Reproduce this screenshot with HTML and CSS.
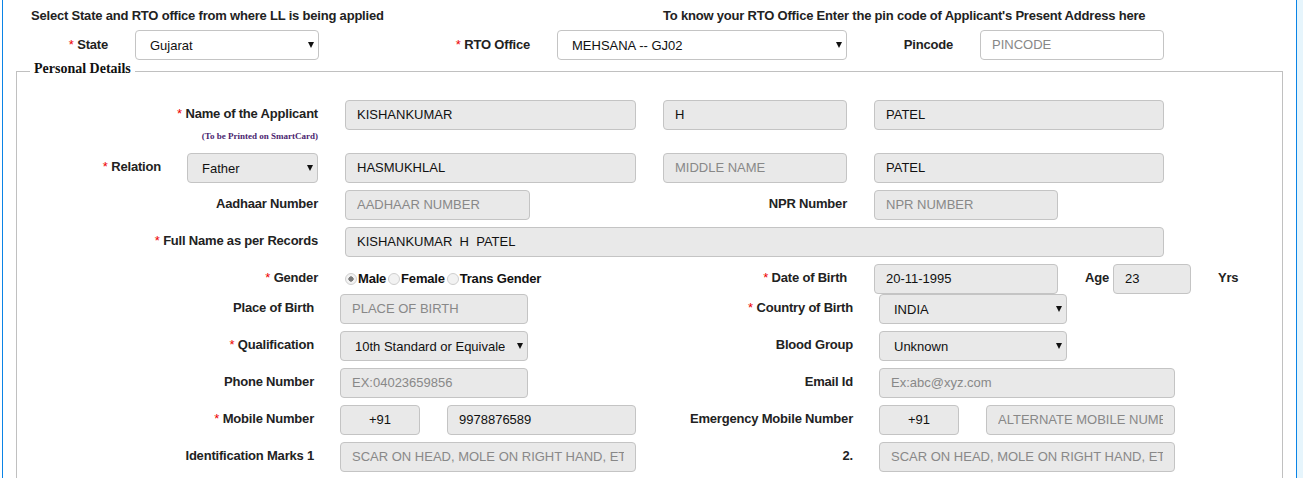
FILE: index.html
```html
<!DOCTYPE html>
<html>
<head>
<meta charset="utf-8">
<title>Learner Licence Application</title>
<link rel="stylesheet" href="styles.css">
</head>
<body>
<div class="page">
  <div class="frame">
    <div class="head">
      <div class="head-left">Select State and RTO office from where LL is being applied</div>
      <div class="head-right">To know your RTO Office Enter the pin code of Applicant's Present Address here</div>
    </div>
    <div class="toprow">
      <div class="lbl top"><span class="req">*</span> State</div>
      <div class="sel"><select class="white"><option>Gujarat</option></select></div>
      <div class="lbl top"><span class="req">*</span> RTO Office</div>
      <div class="sel"><select class="white"><option>MEHSANA -- GJ02</option></select></div>
      <div class="lbl top">Pincode</div>
      <input class="inp white" placeholder="PINCODE">
    </div>

    <fieldset class="personal">
      <legend>Personal Details</legend>

      <div class="rows rows-a">
        <div class="row ra name-row">
          <div class="lblcell">
            <div class="lbl"><span class="req">*</span> Name of the Applicant</div>
            <div class="note">(To be Printed on SmartCard)</div>
          </div>
          <input class="inp w291" value="KISHANKUMAR">
          <input class="inp w184" value="H">
          <input class="inp w290" value="PATEL">
        </div>

        <div class="row ra">
          <div class="relcell">
            <div class="lbl"><span class="req">*</span> Relation</div>
            <div class="sel w131"><select><option>Father</option></select></div>
          </div>
          <input class="inp w291" value="HASMUKHLAL">
          <input class="inp w184" placeholder="MIDDLE NAME">
          <input class="inp w290" value="PATEL">
        </div>

        <div class="row ra">
          <div class="lbl">Aadhaar Number</div>
          <input class="inp w185" placeholder="AADHAAR NUMBER">
          <div class="lbl">NPR Number</div>
          <input class="inp w184" placeholder="NPR NUMBER">
        </div>

        <div class="row ra">
          <div class="lbl"><span class="req">*</span> Full Name as per Records</div>
          <input class="inp full" value="KISHANKUMAR  H  PATEL">
        </div>

        <div class="row ra">
          <div class="lbl"><span class="req">*</span> Gender</div>
          <div class="radios">
            <input type="radio" name="gender" checked><span>Male</span>
            <input type="radio" name="gender"><span>Female</span>
            <input type="radio" name="gender"><span>Trans Gender</span>
          </div>
          <div class="lbl"><span class="req">*</span> Date of Birth</div>
          <div class="dobcell">
            <input class="inp w184" value="20-11-1995">
            <div class="lbl age">Age</div>
            <input class="inp w78" value="23">
            <div class="lbl yrs">Yrs</div>
          </div>
        </div>
      </div>

      <div class="rows rows-b">
        <div class="row rb">
          <div class="lbl">Place of Birth</div>
          <input class="inp w188" placeholder="PLACE OF BIRTH">
          <div class="lbl"><span class="req">*</span> Country of Birth</div>
          <div class="sel w188"><select><option>INDIA</option></select></div>
        </div>

        <div class="row rb">
          <div class="lbl"><span class="req">*</span> Qualification</div>
          <div class="sel w188"><select><option>10th Standard or Equivalent</option></select></div>
          <div class="lbl">Blood Group</div>
          <div class="sel w188"><select><option>Unknown</option></select></div>
        </div>

        <div class="row rb">
          <div class="lbl">Phone Number</div>
          <input class="inp w188" placeholder="EX:04023659856">
          <div class="lbl">Email Id</div>
          <input class="inp w296" placeholder="Ex:abc@xyz.com">
        </div>

        <div class="row rb">
          <div class="lbl"><span class="req">*</span> Mobile Number</div>
          <div class="pair">
            <input class="inp w80 center" value="+91">
            <input class="inp w189" value="9978876589">
          </div>
          <div class="lbl">Emergency Mobile Number</div>
          <div class="pair">
            <input class="inp w80 center" value="+91">
            <input class="inp w189" placeholder="ALTERNATE MOBILE NUMBER">
          </div>
        </div>

        <div class="row rb">
          <div class="lbl">Identification Marks 1</div>
          <input class="inp w296" placeholder="SCAR ON HEAD, MOLE ON RIGHT HAND, ETC">
          <div class="lbl">2.</div>
          <input class="inp w296" placeholder="SCAR ON HEAD, MOLE ON RIGHT HAND, ETC">
        </div>
      </div>
    </fieldset>
  </div>
</div>
</body>
</html>
```

FILE: styles.css
```css
* { box-sizing: border-box; }
html, body { margin: 0; padding: 0; }
body {
  background: #e6f5fc;
  font-family: "Liberation Sans", Arial, sans-serif;
  font-size: 13px;
  color: #222;
}
.page {
  width: 1297px;
  height: 478px;
  overflow: hidden;
  background: #fff;
  padding-left: 2px;
}
.frame {
  border-left: 1px solid #0b84e6;
  border-right: 1px solid #0b84e6;
  min-height: 478px;
  padding-top: 8px;
}
.head {
  display: grid;
  grid-template-columns: 660px auto;
  font-weight: bold;
  line-height: 16px;
  letter-spacing: -0.2px;
  color: #222;
}
.head-left { padding-left: 28px; }

.toprow {
  display: grid;
  grid-template-columns: 105px 184px 184px 290px 79px 184px;
  column-gap: 27px;
  margin-top: 6px;
  height: 30px;
}

.lbl {
  font-weight: bold;
  text-align: right;
  line-height: 16px;
  padding-top: 6px;
  letter-spacing: -0.2px;
  color: #222;
  white-space: nowrap;
}
.lbl.top { padding-top: 7px; }
.req { color: #e00; font-weight: normal; letter-spacing: 0; }

.inp {
  display: block;
  height: 30px;
  border: 1px solid #c4c4c4;
  border-radius: 4px;
  background: #e9e9e9;
  font: 13px "Liberation Sans", Arial, sans-serif;
  color: #111;
  padding: 0 11px 1px;
  outline: none;
  width: 100%;
  margin: 0;
}
.inp::placeholder { color: #888; opacity: 1; }
.inp.center { text-align: center; }
.white { background: #fff !important; }

.sel { position: relative; }
.sel select {
  -webkit-appearance: none;
  appearance: none;
  display: block;
  width: 100%;
  height: 30px;
  border: 1px solid #c4c4c4;
  border-radius: 4px;
  background: #e9e9e9;
  font: 13px "Liberation Sans", Arial, sans-serif;
  color: #111;
  padding: 0 22px 0 14px;
  margin: 0;
  outline: none;
}
.sel::after {
  content: "";
  position: absolute;
  right: 5px;
  top: 12px;
  border-left: 3.5px solid transparent;
  border-right: 3.5px solid transparent;
  border-top: 6px solid #111;
  pointer-events: none;
}

.w78 { width: 78px; }
.w80 { width: 80px; }
.w131 { width: 131px; }
.w184 { width: 184px; }
.w185 { width: 185px; }
.w188 { width: 188px; }
.w189 { width: 189px; }
.w290 { width: 290px; }
.w291 { width: 291px; }
.w296 { width: 296px; }

.personal {
  margin: 1px 13px 0;
  padding: 0 0 20px;
  border: 1px solid #c0c0c0;
  min-width: 0;
}
.personal legend {
  margin-left: 13px;
  padding: 0 4px 4px;
  font: bold 14px "Liberation Serif", "Times New Roman", serif;
  line-height: 16px;
  color: #111;
}

.rows { display: flex; flex-direction: column; gap: 7px; }
.rows-a { padding-top: 19px; }
.row { display: grid; align-items: start; }
.ra {
  grid-template-columns: 301px 291px 184px 1fr;
  column-gap: 27px;
}
.rb {
  grid-template-columns: 297px 296px 191px 1fr;
  column-gap: 26px;
}
.name-row { margin-bottom: 4px; }
.lblcell { display: flex; flex-direction: column; align-items: flex-end; }
.note {
  margin-top: 8px;
  font: bold 9px "Liberation Serif", "Times New Roman", serif;
  line-height: 12px;
  color: #4b1f70;
  white-space: nowrap;
}
.relcell {
  display: flex;
  justify-content: flex-end;
  gap: 26px;
}
.full {
  grid-column: 2 / span 3;
  width: 819px;
}
.radios {
  display: flex;
  align-items: center;
  padding-top: 7px;
  line-height: 16px;
  font-weight: bold;
  letter-spacing: -0.2px;
  color: #111;
  white-space: nowrap;
}
.radios input {
  -webkit-appearance: none;
  appearance: none;
  width: 12px;
  height: 12px;
  margin: 0 1px 0 0;
  border: 1px solid #cfcfcf;
  border-radius: 50%;
  background: #f2f2f2;
}
.radios input:checked {
  background: radial-gradient(circle, #7a7a7a 0 2.4px, #f2f2f2 2.9px);
}
.radios span { margin-right: 2px; }
.dobcell { display: flex; align-items: flex-start; }
.lbl.age { margin-left: 27px; margin-right: 4px; }
.lbl.yrs { margin-left: 27px; }
.pair { display: flex; gap: 27px; }
```
